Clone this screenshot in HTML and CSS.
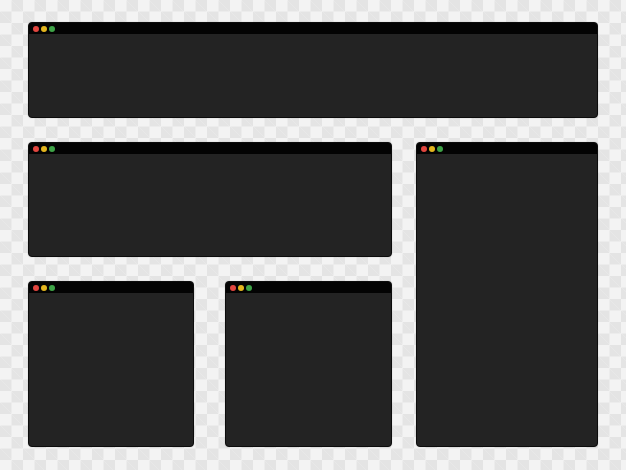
FILE: index.html
```html
<!DOCTYPE html>
<html>
<head>
<meta charset="utf-8">
<link rel="stylesheet" href="styles.css">
</head>
<body>
<div class="board">
  <div class="win win-top"><div class="bar"><span class="dot red"></span><span class="dot yellow"></span><span class="dot green"></span></div><div class="content"></div></div>
  <div class="win win-mid"><div class="bar"><span class="dot red"></span><span class="dot yellow"></span><span class="dot green"></span></div><div class="content"></div></div>
  <div class="win win-tall"><div class="bar"><span class="dot red"></span><span class="dot yellow"></span><span class="dot green"></span></div><div class="content"></div></div>
  <div class="win win-bl"><div class="bar"><span class="dot red"></span><span class="dot yellow"></span><span class="dot green"></span></div><div class="content"></div></div>
  <div class="win win-bm"><div class="bar"><span class="dot red"></span><span class="dot yellow"></span><span class="dot green"></span></div><div class="content"></div></div>
</div>
</body>
</html>
```
FILE: styles.css
```css
html, body {
  margin: 0;
  padding: 0;
  width: 626px;
  height: 470px;
  overflow: hidden;
}
body {
  background-color: #f3f3f3;
  background-image:
    linear-gradient(45deg, #e4e4e4 25%, transparent 25%, transparent 75%, #e4e4e4 75%),
    linear-gradient(45deg, #e4e4e4 25%, transparent 25%, transparent 75%, #e4e4e4 75%);
  background-size: 23px 23px;
  background-position: 0 0, 11.5px 11.5px;
  font-family: "Liberation Sans", Arial, sans-serif;
}
.board {
  display: grid;
  grid-template-columns: 166px 31px 167px 24px 182px;
  grid-template-rows: 96px 24px 115px 24px 166px;
  padding: 22px 0 0 28px;
}
.win {
  display: flex;
  flex-direction: column;
  background: #232323;
  border: 1px solid #0c0c0c;
  border-radius: 4px;
  overflow: hidden;
  box-sizing: border-box;
  box-shadow: 0 0 1px rgba(0,0,0,0.35);
}
.win-top { grid-column: 1 / 6; grid-row: 1; }
.win-mid { grid-column: 1 / 4; grid-row: 3; }
.win-tall { grid-column: 5; grid-row: 3 / 6; }
.win-bl { grid-column: 1; grid-row: 5; }
.win-bm { grid-column: 3; grid-row: 5; }
.bar {
  height: 11px;
  flex: none;
  background: #030303;
  display: flex;
  align-items: center;
  gap: 2px;
  padding-left: 4px;
}
.dot {
  width: 6px;
  height: 6px;
  border-radius: 50%;
}
.red { background: #e2463f; }
.yellow { background: #e4b61e; }
.green { background: #3ea447; }
.content { flex: 1; }
```
